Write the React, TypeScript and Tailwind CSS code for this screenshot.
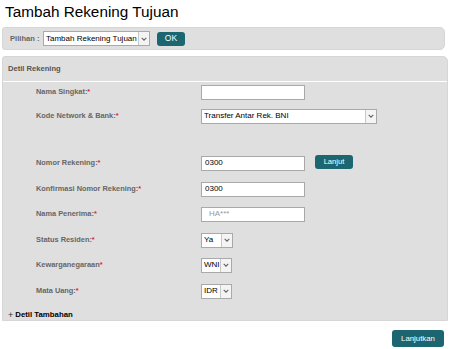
import React from "react";

const font = { fontFamily: '"Liberation Sans", Arial, sans-serif' };

function Chevron() {
  return (
    <span className="flex h-full w-[11px] items-center justify-center border-l border-[#c8c8c8] bg-[#f4f4f4]">
      <svg width="6" height="4" viewBox="0 0 6 4">
        <path d="M0.7 0.8 L3 3.1 L5.3 0.8" fill="none" stroke="#666" strokeWidth="1.1" />
      </svg>
    </span>
  );
}

function Select({ value, w }: { value: string; w: string }) {
  return (
    <div className={`flex h-[15px] items-center border border-[#a9a9a9] bg-white ${w}`}>
      <span className="flex-1 truncate pl-[2px] text-[8px] leading-none text-black">{value}</span>
      <Chevron />
    </div>
  );
}

function Input({ value, muted }: { value?: string; muted?: boolean }) {
  return (
    <div className="flex h-[15px] w-[104px] items-center border border-[#a9a9a9] bg-white">
      <span className={`text-[8px] leading-none ${muted ? "pl-[7px] text-[#999]" : "pl-[3px] text-black"}`}>{value}</span>
    </div>
  );
}

function Row({ label, mt, children }: { label: string; mt: string; children: React.ReactNode }) {
  return (
    <div className={`flex h-[16px] items-center ${mt}`}>
      <div className="w-[198px] shrink-0 pl-[33px] text-[7.4px] font-bold leading-none text-[#666]">
        {label}
        <span className="text-[#e0223a]">*</span>
      </div>
      <div className="flex items-center">{children}</div>
    </div>
  );
}

export default function App() {
  return (
    <div className="relative h-[349px] w-[450px] overflow-hidden bg-white" style={font}>
      <div className="pl-[5px] pt-[2px] text-[15.3px] leading-[20px] text-black">Tambah Rekening Tujuan</div>

      <div className="mx-[2px] mt-[5px] flex h-[23px] w-[443px] items-center rounded-r-[5px] rounded-l-[3px] border border-[#d6d6d6] bg-[#dfdfdf]">
        <span className="ml-[7px] w-[33px] text-[7.6px] font-bold leading-none text-[#666]">Pilihan :</span>
        <Select value="Tambah Rekening Tujuan" w="w-[107px]" />
        <button className="ml-[7px] flex h-[14px] w-[28px] items-center justify-center rounded-[3px] bg-[#1b6670] text-[8.5px] leading-none text-white">
          OK
        </button>
      </div>

      <div className="mx-[2px] mt-[6px] h-[265px] w-[446px] rounded-tr-[5px] rounded-tl-[3px] border border-[#d6d6d6] bg-[#dfdfdf]">
        <div className="flex h-[25px] items-center border-b border-white pl-[5px] text-[7.6px] font-bold leading-none text-[#555]">
          Detil Rekening
        </div>
        <Row label="Nama Singkat:" mt="mt-[2px]">
          <Input />
        </Row>
        <Row label="Kode Network & Bank:" mt="mt-[8px]">
          <Select value="Transfer Antar Rek. BNI" w="w-[176px]" />
        </Row>
        <Row label="Nomor Rekening:" mt="mt-[31px]">
          <Input value="0300" />
          <button className="ml-[10px] -mt-[3px] flex h-[14px] w-[38px] items-center justify-center rounded-[3px] bg-[#1b6670] text-[7.6px] leading-none text-white">
            Lanjut
          </button>
        </Row>
        <Row label="Konfirmasi Nomor Rekening:" mt="mt-[10px]">
          <Input value="0300" />
        </Row>
        <Row label="Nama Penerima:" mt="mt-[9px]">
          <Input value="HA***" muted />
        </Row>
        <Row label="Status Residen:" mt="mt-[10px]">
          <Select value="Ya" w="w-[32px]" />
        </Row>
        <Row label="Kewarganegaraan" mt="mt-[9px]">
          <Select value="WNI" w="w-[31px]" />
        </Row>
        <Row label="Mata Uang:" mt="mt-[10px]">
          <Select value="IDR" w="w-[31px]" />
        </Row>
        <div className="mt-[10px] flex h-[12px] items-center pl-[5px]">
          <span className="mr-[2px] text-[9px] leading-none text-[#333]">+</span>
          <span className="text-[7.8px] font-bold leading-none text-black">Detil Tambahan</span>
        </div>
      </div>

      <div className="mt-[9px] flex justify-end pr-[6px]">
        <button className="flex h-[17px] w-[52px] items-center justify-center rounded-[3px] bg-[#1b6670] text-[7.8px] leading-none text-white">
          Lanjutkan
        </button>
      </div>
    </div>
  );
}
